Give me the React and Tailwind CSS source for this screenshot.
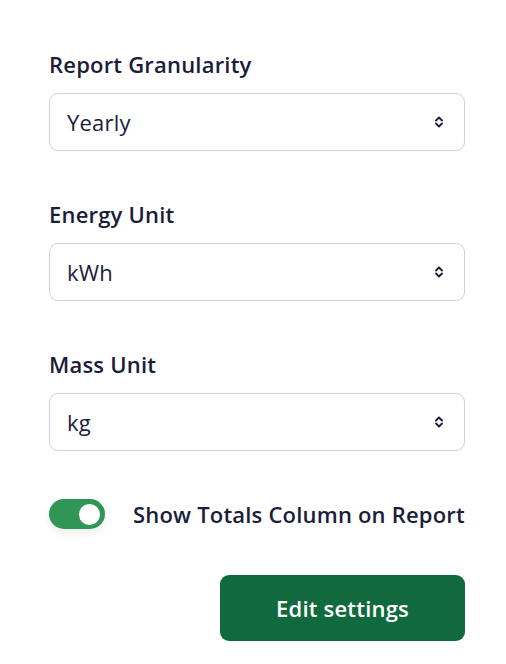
import { useState } from 'react';

function SelectField({ label, value, options, onChange }) {
  return (
    <div className="flex flex-col">
      <label className="text-[22px] font-semibold tracking-[0.2px] text-[#1b1d3a] leading-[26px] mb-[16px]">{label}</label>
      <div className="relative">
        <select
          value={value}
          onChange={(e) => onChange(e.target.value)}
          className="w-full h-[58px] appearance-none bg-white border border-[#c9d2de] rounded-[9px] pl-[17px] pr-10 text-[22px] tracking-[0.2px] text-[#1b1d3a] focus:outline-none"
        >
          {options.map((o) => (
            <option key={o} value={o}>{o}</option>
          ))}
        </select>
        {/* up/down chevrons */}
        <svg className="absolute right-[22px] top-1/2 -translate-y-1/2 pointer-events-none" width="8" height="12" viewBox="0 0 8 12" fill="none">
          <path d="M1 4.5 L4 1.5 L7 4.5" stroke="#1b1d3a" strokeWidth="1.8" strokeLinecap="round" strokeLinejoin="round" />
          <path d="M1 7.5 L4 10.5 L7 7.5" stroke="#1b1d3a" strokeWidth="1.8" strokeLinecap="round" strokeLinejoin="round" />
        </svg>
      </div>
    </div>
  );
}

export default function App() {
  const [granularity, setGranularity] = useState('Yearly');
  const [energy, setEnergy] = useState('kWh');
  const [mass, setMass] = useState('kg');
  const [showTotals, setShowTotals] = useState(true);

  return (
    <div className="min-h-[664px] w-[506px] bg-white" style={{ fontFamily: '"Open Sans", "Noto Sans", sans-serif' }}>
      <div className="pl-[49px] pr-[41px] pt-[51px] flex flex-col gap-[50px]">
        <SelectField label="Report Granularity" value={granularity} options={['Monthly', 'Quarterly', 'Yearly']} onChange={setGranularity} />
        <SelectField label="Energy Unit" value={energy} options={['kWh', 'MWh', 'GJ']} onChange={setEnergy} />
        <SelectField label="Mass Unit" value={mass} options={['kg', 't', 'lb']} onChange={setMass} />
      </div>

      <div className="pl-[49px] pr-[41px] mt-[48px] flex items-center gap-[28px]">
        <button
          type="button"
          onClick={() => setShowTotals(!showTotals)}
          className={`w-[56px] h-[30px] rounded-full flex items-center px-[5px] shadow-[0_4px_8px_rgba(0,0,0,0.08)] ${showTotals ? 'bg-[#2f9656] justify-end' : 'bg-gray-300 justify-start'}`}
        >
          <span className="block w-[21px] h-[21px] rounded-full bg-white" />
        </button>
        <span className="text-[22px] leading-[30px] font-semibold tracking-[0.2px] text-[#1b1d3a] whitespace-nowrap">Show Totals Column on Report</span>
      </div>

      <div className="pl-[49px] pr-[41px] mt-[46px] flex justify-end">
        <button
          type="button"
          className="w-[245px] h-[66px] rounded-[9px] bg-[#116a3d] text-white text-[22px] tracking-[0.2px] font-semibold"
        >
          Edit settings
        </button>
      </div>
    </div>
  );
}
